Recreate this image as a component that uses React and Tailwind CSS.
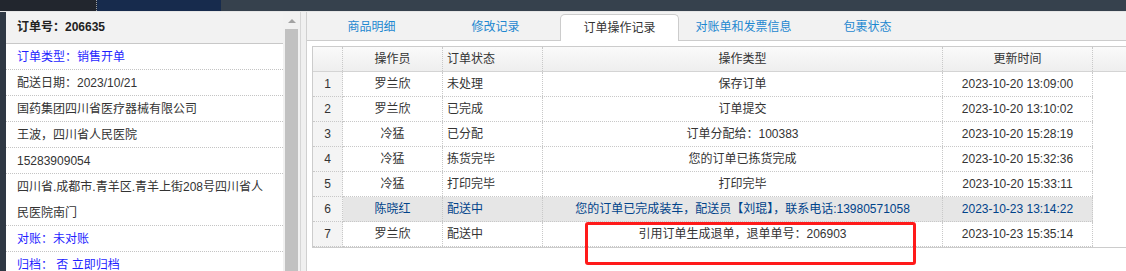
import React from "react";

const FONT = { fontFamily: '"Liberation Sans", "Noto Sans CJK SC", sans-serif' };

const rows = [
  ["1", "罗兰欣", "未处理", "保存订单", "2023-10-20 13:09:00"],
  ["2", "罗兰欣", "已完成", "订单提交", "2023-10-20 13:10:02"],
  ["3", "冷猛", "已分配", "订单分配给：100383", "2023-10-20 15:28:19"],
  ["4", "冷猛", "拣货完毕", "您的订单已拣货完成", "2023-10-20 15:32:36"],
  ["5", "冷猛", "打印完毕", "打印完毕", "2023-10-20 15:33:11"],
  ["6", "陈晓红", "配送中", "您的订单已完成装车，配送员【刘琨】，联系电话:13980571058", "2023-10-23 13:14:22"],
  ["7", "罗兰欣", "配送中", "引用订单生成退单，退单单号：206903", "2023-10-23 15:35:14"],
];

const tabs = ["商品明细", "修改记录", "订单操作记录", "对账单和发票信息", "包裹状态"];

function LeftRow({ children, blue, tall }) {
  return (
    <div
      className={`border-b border-dotted border-[#c4c4c4] pl-[11px] pr-2 leading-[26px] ${tall ? "h-[52px]" : "h-[26px]"} ${blue ? "text-[#1f1fff]" : "text-[#333]"}`}
    >
      {children}
    </div>
  );
}

export default function App() {
  return (
    <div className="relative w-[1126px] h-[271px] overflow-hidden text-[12px] bg-[#f0f0f0]" style={FONT}>
      {/* top bar */}
      <div className="flex h-[11px]">
        <div className="w-[97px] bg-[#22262e] border-r border-dotted border-[#9aa0a8]" />
        <div className="w-[124px] bg-[#172b4d]" />
        <div className="flex-1 bg-[#36414d]" />
      </div>
      <div className="flex h-[260px] border-t border-[#e6e6e6]">
        {/* dark strip */}
        <div className="w-[6px] bg-[#2f3844]" />
        {/* left panel */}
        <div className="w-[277px] bg-white flex flex-col">
          <div className="h-[32px] bg-[#f2f2f2] border-b border-[#c8c8c8] pl-[11px] leading-[31px] font-bold text-[#222]">
            订单号：206635
          </div>
          <LeftRow blue>订单类型：销售开单</LeftRow>
          <LeftRow>配送日期：2023/10/21</LeftRow>
          <LeftRow>国药集团四川省医疗器械有限公司</LeftRow>
          <LeftRow>王波，四川省人民医院</LeftRow>
          <LeftRow>15283909054</LeftRow>
          <LeftRow tall>
            四川省.成都市.青羊区.青羊上街208号四川省人
            <br />
            民医院南门
          </LeftRow>
          <LeftRow blue>对账：未对账</LeftRow>
          <LeftRow blue>归档：&nbsp;否 立即归档</LeftRow>
        </div>
        {/* scrollbar */}
        <div className="w-[17px] bg-[#f1f1f1] flex flex-col items-center">
          <div className="h-[17px] flex items-center justify-center">
            <div className="w-0 h-0 border-l-[4px] border-r-[4px] border-b-[4px] border-l-transparent border-r-transparent border-b-[#a3a3a3]" />
          </div>
          <div className="w-[13px] flex-1 bg-[#c1c1c1]" />
        </div>
        {/* gap */}
        <div className="w-[6px] bg-[#f0f0f0] border-l border-[#d6d6d6]" />
        {/* right panel */}
        <div className="flex-1 flex flex-col border-l border-[#d0d0d0] bg-white">
          <div className="h-[29px] bg-[#f2f2f2] border-b border-[#cccccc] flex items-end pl-[5px] gap-[5px]">
            {tabs.map((t, i) =>
              i === 2 ? (
                <div
                  key={t}
                  className="w-[119px] h-[27px] -mb-px bg-white border border-b-0 border-[#cccccc] rounded-t-[5px] flex items-center justify-center text-[#333] leading-none"
                >
                  {t}
                </div>
              ) : (
                <div key={t} className="w-[119px] h-[27px] flex items-center justify-center text-[#1e88d0] leading-none">
                  {t}
                </div>
              )
            )}
          </div>
          <div className="pt-[5px] pl-[5px]">
            <div className="border-l border-t border-b border-[#cccccc]">
              {/* header */}
              <div className="flex h-[25px] border-b border-[#d4d4d4] bg-gradient-to-b from-[#fafafa] to-[#eeeeee] text-[#333]">
                <div className="w-[30px] border-r border-dotted border-[#c8c8c8]" />
                <div className="w-[100px] border-r border-dotted border-[#c8c8c8] flex items-center justify-center">操作员</div>
                <div className="w-[100px] border-r border-dotted border-[#c8c8c8] flex items-center pl-[4px]">订单状态</div>
                <div className="w-[400px] border-r border-dotted border-[#c8c8c8] flex items-center justify-center">操作类型</div>
                <div className="w-[150px] border-r border-dotted border-[#c8c8c8] flex items-center justify-center">更新时间</div>
                <div className="flex-1" />
              </div>
              {rows.map((r, i) => {
                const hl = i === 5;
                return (
                  <div key={r[0]} className="flex h-[25px]">
                    <div className="w-[30px] bg-[#f4f4f4] border-r border-b border-dotted border-[#c8c8c8] flex items-center justify-center text-[#333]">
                      {r[0]}
                    </div>
                    <div
                      className={`flex border-b border-dotted border-[#c8c8c8] ${hl ? "bg-[#e6e6e6] text-[#00438a]" : "text-[#333]"}`}
                    >
                      <div className="w-[100px] border-r border-dotted border-[#c8c8c8] flex items-center justify-center">{r[1]}</div>
                      <div className="w-[100px] border-r border-dotted border-[#c8c8c8] flex items-center pl-[4px]">{r[2]}</div>
                      <div className="w-[400px] border-r border-dotted border-[#c8c8c8] flex items-center justify-center whitespace-nowrap">{r[3]}</div>
                      <div className="w-[150px] border-r border-dotted border-[#c8c8c8] flex items-center justify-center">{r[4]}</div>
                    </div>
                  </div>
                );
              })}
            </div>
          </div>
        </div>
      </div>
      {/* red annotation */}
      <div className="absolute left-[585px] top-[222px] w-[331px] h-[43px] border-[3px] border-[#ff1a1a] rounded-[3px]" />
    </div>
  );
}
